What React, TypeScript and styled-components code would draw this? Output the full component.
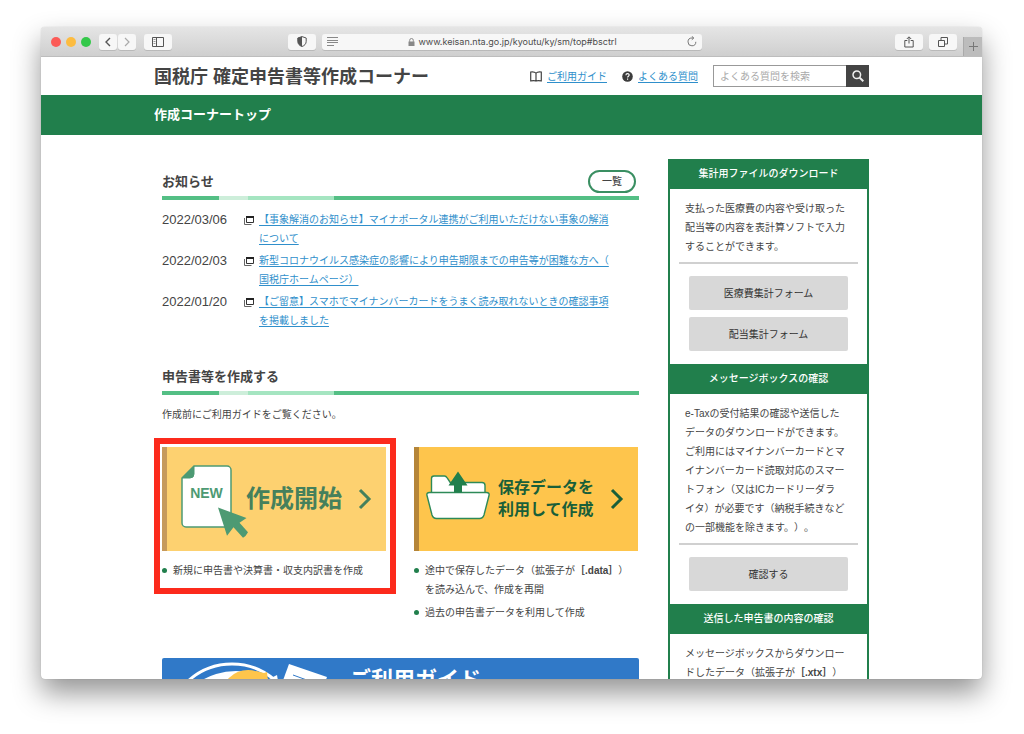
import React from "react";
import styled, { createGlobalStyle } from "styled-components";

const color = {
  green: "#217f4c",
  text: "#444",
  link: "#2f8fcb",
  grey: "#d8d8d8",
};

const GlobalStyle = createGlobalStyle`
  * { box-sizing: border-box; }
  body {
    margin: 0;
    background: #fff;
    color: ${color.text};
    font-family: "Liberation Sans", "Noto Sans CJK JP", sans-serif;
    font-size: 10px;
    line-height: 19px;
    text-spacing-trim: space-all;
  }
  h1, h2, p, ul { margin: 0; padding: 0; }
  ul { list-style: none; }
  button, input { font: inherit; color: inherit; }
  svg { display: block; }
`;

const Desktop = styled.div`
  display: flex;
  height: 100vh;
  padding: 27px 42px 55px 41px;
  overflow: hidden;
`;

const BrowserWindow = styled.div`
  display: flex;
  flex: 1;
  flex-direction: column;
  min-width: 0;
  overflow: hidden;
  border-radius: 4px;
  background: #fff;
  box-shadow: 0 14px 28px rgba(0, 0, 0, 0.42), 0 0 1px rgba(0, 0, 0, 0.3);
`;

/* Browser toolbar */

const Toolbar = styled.div`
  display: flex;
  flex: none;
  align-items: center;
  height: 30px;
  border-bottom: 1px solid #bdbdbd;
  background: linear-gradient(#e5e5e5, #cfcfcf);
`;

const ToolbarSide = styled.div<{ $end?: boolean }>`
  display: flex;
  flex: 1;
  align-items: center;
  justify-content: ${(p) => (p.$end ? "flex-end" : "flex-start")};
  gap: ${(p) => (p.$end ? 6 : 8)}px;
  height: 100%;
  padding-left: 10px;
`;

const Lights = styled.div`
  display: flex;
  gap: 5px;
`;

const Light = styled.button<{ $fill: string }>`
  width: 10px;
  height: 10px;
  padding: 0;
  border: 0;
  border-radius: 50%;
  background: ${(p) => p.$fill};
`;

const ButtonPair = styled.div`
  display: flex;
  gap: 1px;
`;

const ToolButton = styled.button<{ $narrow?: boolean; $push?: boolean }>`
  display: grid;
  place-items: center;
  width: ${(p) => (p.$narrow ? 18 : 28)}px;
  height: 16px;
  margin-left: ${(p) => (p.$push ? "auto" : 0)};
  margin-right: ${(p) => (p.$push ? 6 : 0)}px;
  padding: 0;
  border: 0;
  border-radius: 3px;
  background: #f7f7f7;
  color: #555;
  box-shadow: 0 1px 0 rgba(0, 0, 0, 0.12);
`;

const AddressBar = styled.div`
  display: flex;
  flex: 0 1 380px;
  align-items: center;
  justify-content: space-between;
  height: 16px;
  padding: 0 4px;
  border-radius: 3px;
  background: #f7f7f7;
  color: #666;
  box-shadow: 0 1px 0 rgba(0, 0, 0, 0.12);
`;

const Address = styled.label`
  display: flex;
  align-items: center;
  gap: 3px;
`;

const AddressInput = styled.input`
  field-sizing: content;
  height: 16px;
  padding: 0;
  border: 0;
  background: none;
  color: #4c4c4c;
  font: 9px/16px Inter, sans-serif;
`;

const NewTab = styled.button`
  display: grid;
  align-self: flex-end;
  place-items: center;
  width: 19px;
  height: 19px;
  padding: 0;
  border: 0;
  border-left: 1px solid #aaa;
  background: #bcbcbc;
  color: #777;
`;

/* Page frame */

const Page = styled.div`
  flex: 1;
  min-height: 0;
  overflow: hidden;
`;

const Container = styled.div`
  max-width: 715px;
  margin: 0 auto;
`;

const HeaderRow = styled(Container)`
  display: flex;
  align-items: center;
  height: 38px;
`;

const SiteTitle = styled.h1`
  margin-right: auto;
  font-size: 18px;
  line-height: 26px;
  padding-top: 2px;
`;

const HeaderLink = styled.div`
  display: flex;
  align-items: center;
  gap: 5px;
  margin-right: 15px;
`;

const TextLink = styled.a`
  color: ${color.link};
  text-decoration: underline;
  text-underline-offset: 2px;
`;

const SearchForm = styled.form`
  display: flex;
  height: 22px;
`;

const SearchInput = styled.input`
  width: 133px;
  padding: 0 6px;
  border: 1px solid #999;
  border-right: 0;
  border-radius: 0;
  background: #fff;
  &::placeholder { color: #aaa; }
`;

const SearchButton = styled.button`
  display: grid;
  place-items: center;
  width: 23px;
  padding: 0;
  border: 0;
  background: #444;
  color: #eee;
`;

const TitleBand = styled.div`
  background: ${color.green};
  color: #fff;
  font-size: 13px;
  font-weight: 700;
  line-height: 40px;
`;

const Columns = styled(Container)`
  display: grid;
  grid-template-columns: minmax(0, 1fr) 201px;
  align-items: start;
  gap: 29px;
  padding-top: 24px;
`;

/* Main column */

const Main = styled.main`
  padding: 11px 0 0 8px;
`;

const SectionHead = styled.div`
  display: flex;
  align-items: center;
  justify-content: space-between;
  height: 30px;
  padding: 0 3px 7px 0;
  background: linear-gradient(
      to right,
      #54bf85 12%,
      #cdeeda 12% 18%,
      #a5e5c1 18% 36%,
      #54bf85 36%
    )
    bottom / 100% 4px no-repeat;
`;

const SectionTitle = styled.h2`
  font-size: 13px;
  line-height: 23px;
`;

const Pill = styled.a`
  width: 48px;
  height: 23px;
  border: 2px solid #3a8f62;
  border-radius: 12px;
  color: ${color.text};
  font-weight: 500;
  text-align: center;
  text-decoration: none;
`;

const NewsList = styled.ul`
  display: grid;
  gap: 3px;
  margin: 10px 0 35px;
`;

const NewsItem = styled.li`
  display: grid;
  grid-template-columns: 82px 15px minmax(0, 1fr);
`;

const NewsDate = styled.time`
  font-size: 13px;
`;

const WindowIcon = styled.svg`
  margin-top: 6px;
`;

const Lead = styled.p`
  margin: 10px 0 23px;
`;

const Choices = styled.div`
  display: grid;
  grid-template-columns: 1fr 1fr;
  gap: 28px;
  padding-right: 1px;
  margin-bottom: 36px;
`;

const Choice = styled.section`
  position: relative;
`;

const RedFrame = styled.div`
  position: absolute;
  inset: -9px -10px 28px -8px;
  border: 6px solid #fc2a1c;
  pointer-events: none;
`;

const ChoiceCard = styled.a<{ $soft?: boolean }>`
  display: flex;
  align-items: center;
  height: 104px;
  margin-bottom: 10px;
  padding-right: 14px;
  border-left: 5px solid ${(p) => (p.$soft ? "#c69a5c" : "#b58538")};
  background: ${(p) => (p.$soft ? "#fdd170" : "#fec54c")};
  color: ${(p) => (p.$soft ? "#45805c" : "#195f39")};
  font-size: ${(p) => (p.$soft ? 24 : 16)}px;
  font-weight: 700;
  line-height: 22px;
  text-decoration: none;
`;

const CardIcon = styled.svg`
  flex: none;
  overflow: visible;
`;

const Chevron = styled.svg`
  margin-left: auto;
`;

const Bullets = styled.ul`
  display: grid;
  gap: 4px;
`;

const Bullet = styled.li`
  display: flex;
  gap: 6px;
  &::before {
    content: "";
    flex: none;
    width: 5px;
    height: 5px;
    margin-top: 7px;
    border-radius: 50%;
    background: ${color.green};
  }
`;

const GuideBanner = styled.a`
  display: flex;
  height: 100px;
  overflow: hidden;
  border-radius: 2px;
  background: #3079c8;
  color: #fff;
  font-size: 22px;
  font-weight: 700;
  line-height: 24px;
  text-decoration: none;
`;

const BannerText = styled.span`
  padding-top: 10px;
`;

/* Side column */

const Aside = styled.aside`
  border: solid ${color.green};
  border-width: 0 2px;
`;

const AsideTitle = styled.h2`
  background: ${color.green};
  color: #fff;
  font-size: 10px;
  font-weight: 500;
  line-height: 30px;
  text-align: center;
`;

const AsideBody = styled.div`
  padding: 10px 9px 13px;
`;

const AsideText = styled.p`
  padding: 0 0 6px 6px;
  border-bottom: 2px solid #d0d0d0;
`;

const AsideButtons = styled.div`
  display: grid;
  gap: 7px;
  padding: 12px 10px 0;
`;

const GreyButton = styled.button`
  height: 34px;
  padding: 0;
  border: 0;
  border-radius: 2px;
  background: ${color.grey};
  color: #333;
`;

const news = [
  {
    date: "2022/03/06",
    lines: [
      "【事象解消のお知らせ】マイナポータル連携がご利用いただけない事象の解消",
      "について",
    ],
  },
  {
    date: "2022/02/03",
    lines: [
      "新型コロナウイルス感染症の影響により申告期限までの申告等が困難な方へ（",
      "国税庁ホームページ）",
    ],
  },
  {
    date: "2022/01/20",
    lines: [
      "【ご留意】スマホでマイナンバーカードをうまく読み取れないときの確認事項",
      "を掲載しました",
    ],
  },
];

function BrowserBar() {
  return (
    <Toolbar>
      <ToolbarSide>
        <Lights>
          <Light $fill="#fc5b57" aria-label="閉じる" />
          <Light $fill="#fdbc40" aria-label="しまう" />
          <Light $fill="#34c84a" aria-label="拡大" />
        </Lights>
        <ButtonPair>
          <ToolButton $narrow aria-label="戻る">
            <svg width="8" height="10" viewBox="0 0 8 10" fill="none" stroke="currentColor" strokeWidth="1.4">
              <path d="M6 1 2 5l4 4" />
            </svg>
          </ToolButton>
          <ToolButton $narrow aria-label="進む">
            <svg width="8" height="10" viewBox="0 0 8 10" fill="none" stroke="#aaa" strokeWidth="1.2">
              <path d="m2 1 4 4-4 4" />
            </svg>
          </ToolButton>
        </ButtonPair>
        <ToolButton aria-label="サイドバー">
          <svg width="12" height="10" viewBox="0 0 12 10" fill="none" stroke="currentColor">
            <path d="M.5.5h11v9H.5zM4.5.5v9" />
            <path d="M1.500 2.500h2M1.500 4.500h2M1.500 6.500h2" stroke="#999" />
          </svg>
        </ToolButton>
        <ToolButton $push aria-label="プライバシーレポート">
          <svg width="10" height="11" viewBox="0 0 10 11">
            <path d="M5 .6 9.200 2v3.300C9.200 8 7.500 9.600 5 10.500 2.500 9.600.8 8 .8 5.300V2z" fill="none" stroke="currentColor" />
            <path d="M5 .6v9.900C2.500 9.600.8 8 .8 5.300V2z" fill="currentColor" />
          </svg>
        </ToolButton>
      </ToolbarSide>
      <AddressBar>
        <svg width="12" height="9" viewBox="0 0 12 9" stroke="#888">
          <path d="M1 .5h11M1 3.500h11M1 5.500h11M1 8.500h7" />
        </svg>
        <Address>
          <svg width="7" height="8" viewBox="0 0 7 8" aria-label="安全な接続">
            <path d="M.5 3.500h6V8h-6z" fill="#888" />
            <path d="M1.700 3.800V2.300a1.800 1.800 0 0 1 3.600 0v1.500" fill="none" stroke="#888" />
          </svg>
          <AddressInput readOnly aria-label="アドレス" value="www.keisan.nta.go.jp/kyoutu/ky/sm/top#bsctrl" />
        </Address>
        <svg width="10" height="11" viewBox="0 0 10 11" fill="none" stroke="#777">
          <path d="M8.800 5.800A3.900 3.900 0 1 1 5 2h1.500" />
          <path d="m4.800.3 2 1.700-2 1.800" />
        </svg>
      </AddressBar>
      <ToolbarSide $end>
        <ToolButton aria-label="共有">
          <svg width="10" height="12" viewBox="0 0 10 12" fill="none" stroke="currentColor">
            <path d="M3.300 4.500H.8v6.500h8.400V4.500H6.700M5 7.500V1M2.800 3 5 .8 7.200 3" />
          </svg>
        </ToolButton>
        <ToolButton aria-label="タブの概要">
          <svg width="10" height="10" viewBox="0 0 10 10" fill="none" stroke="currentColor">
            <path d="M.5 3.500h6v6h-6zM3 3.300V.500h6.500V7H6.700" />
          </svg>
        </ToolButton>
        <NewTab aria-label="新規タブ">
          <svg width="9" height="9" viewBox="0 0 9 9" stroke="currentColor">
            <path d="M4.500 0v9M0 4.500h9" />
          </svg>
        </NewTab>
      </ToolbarSide>
    </Toolbar>
  );
}

function SiteHeader() {
  return (
    <header>
      <HeaderRow>
        <SiteTitle>国税庁 確定申告書等作成コーナー</SiteTitle>
        <HeaderLink>
          <svg width="12" height="11" viewBox="0 0 12 11" fill="none" stroke="#444" strokeWidth="1.200">
            <path d="M6 2.200C4.800.9 2.800.7.700 1v8.800c2-.3 4.100-.6 5.300.2 1.200-.8 3.300-.5 5.300-.2V1C9.200.7 7.200.9 6 2.200zM6 2.200V10" />
          </svg>
          <TextLink href="#guide">ご利用ガイド</TextLink>
        </HeaderLink>
        <HeaderLink>
          <svg width="11" height="11" viewBox="0 0 11 11">
            <circle cx="5.500" cy="5.500" r="5.300" fill="#3c3c3c" />
            <path d="M3.900 4.300c0-2.300 3.300-2.100 3.300-.2 0 1.200-1.600 1.200-1.600 2.500M5.600 7.600v1.200" fill="none" stroke="#fff" strokeWidth="1.100" />
          </svg>
          <TextLink href="#faq">よくある質問</TextLink>
        </HeaderLink>
        <SearchForm>
          <SearchInput aria-label="よくある質問を検索" placeholder="よくある質問を検索" />
          <SearchButton type="button" aria-label="検索">
            <svg width="12" height="12" viewBox="0 0 12 12" fill="none" stroke="currentColor" strokeWidth="1.500">
              <circle cx="4.800" cy="4.800" r="3.800" />
              <path d="m7.600 7.600 3.700 3.700" strokeWidth="2" />
            </svg>
          </SearchButton>
        </SearchForm>
      </HeaderRow>
      <TitleBand>
        <Container>作成コーナートップ</Container>
      </TitleBand>
    </header>
  );
}

function ChevronRight() {
  return (
    <Chevron width="14" height="22" viewBox="0 0 14 22" fill="none" stroke="currentColor" strokeWidth="3">
      <path d="m2 2 9 9-9 9" />
    </Chevron>
  );
}

function NewFileIcon() {
  return (
    <CardIcon width="79" height="104" viewBox="5 0 79 104">
      <path
        d="M32 19h33a4 4 0 0 1 4 4v53a4 4 0 0 1-4 4H24a4 4 0 0 1-4-4V31z"
        fill="#fff"
        stroke="#4d9a73"
        strokeWidth="1.500"
      />
      <path d="M32 19v8a4 4 0 0 1-4 4h-8z" fill="#4d9a73" stroke="#4d9a73" />
      <text x="44.500" y="51" textAnchor="middle" fill="#4d9a73" fontSize="14" fontWeight="700">
        NEW
      </text>
      <path d="m56 60.500 28.500 10.500-7 4.700 8.500 9.500q-2 4-5 5.500l-9.500-10.500-6.500 8.500z" fill="#4d9a73" />
    </CardIcon>
  );
}

function FolderIcon() {
  return (
    <CardIcon width="79" height="104" viewBox="5 0 79 104">
      <g fill="#fff" stroke="#2d8a58" strokeWidth="1.400">
        <path d="M17.500 46V31.500a2.500 2.500 0 0 1 2.500-2.500h10.500c1.500 0 2 .8 2.700 2l3 4.500H68a3 3 0 0 1 3 3V46z" />
        <path d="M15.500 45.500h57c2 0 3 1 2.500 3l-5 19.500c-.8 2.500-2 3.500-4.500 3.500h-43c-2.500 0-3.700-1-4.500-3.500L13 48.500c-.5-2 .5-3 2.500-3z" />
      </g>
      <path d="m44 24.500 9.500 14H48v7h-8v-7h-5.500z" fill={color.green} />
    </CardIcon>
  );
}

function BannerArt() {
  return (
    <svg width="187" height="100" viewBox="0 0 187 100">
      <circle cx="70" cy="71" r="65" fill="none" stroke="#fff" strokeWidth="3" />
      <ellipse cx="74" cy="51" rx="52" ry="38" fill="#fff" />
      <circle cx="86" cy="39" r="27" fill="#fec54c" />
      <path d="m94 13 8 2 3-1 1 10-8 4z" fill="#fec54c" />
      <path d="m107 21 8-4 2 12z" fill="#fff" />
      <path d="m127 6 38 13-22 60-38-13z" fill="#fff" />
      <path d="m131 17 22 8" stroke="#3079c8" />
    </svg>
  );
}

export default function App() {
  return (
    <>
      <GlobalStyle />
      <Desktop>
        <BrowserWindow>
          <BrowserBar />
          <Page>
            <SiteHeader />
            <Columns>
              <Main>
                <SectionHead>
                  <SectionTitle>お知らせ</SectionTitle>
                  <Pill href="#news">一覧</Pill>
                </SectionHead>
                <NewsList>
                  {news.map((item) => (
                    <NewsItem key={item.date}>
                      <NewsDate>{item.date}</NewsDate>
                      <WindowIcon width="10" height="9" viewBox="0 0 10 9" fill="none">
                        <path d="M.5 2v6.500h7" stroke="#666" />
                        <path d="M2.500.5h7v6h-7z" stroke="#333" />
                        <path d="M2 1h8" stroke="#222" strokeWidth="2" />
                      </WindowIcon>
                      <div>
                        <TextLink href="#news">
                          {item.lines[0]}
                          <br />
                          {item.lines[1]}
                        </TextLink>
                      </div>
                    </NewsItem>
                  ))}
                </NewsList>

                <SectionHead>
                  <SectionTitle>申告書等を作成する</SectionTitle>
                </SectionHead>
                <Lead>作成前にご利用ガイドをご覧ください。</Lead>
                <Choices>
                  <Choice>
                    <ChoiceCard $soft href="#new">
                      <NewFileIcon />
                      作成開始
                      <ChevronRight />
                    </ChoiceCard>
                    <Bullets>
                      <Bullet>新規に申告書や決算書・収支内訳書を作成</Bullet>
                    </Bullets>
                    <RedFrame />
                  </Choice>
                  <Choice>
                    <ChoiceCard href="#saved">
                      <FolderIcon />
                      <span>
                        保存データを
                        <br />
                        利用して作成
                      </span>
                      <ChevronRight />
                    </ChoiceCard>
                    <Bullets>
                      <Bullet>
                        <span>
                          途中で保存したデータ（拡張子が<b>［.data］</b>）
                          <br />
                          を読み込んで、作成を再開
                        </span>
                      </Bullet>
                      <Bullet>過去の申告書データを利用して作成</Bullet>
                    </Bullets>
                  </Choice>
                </Choices>
                <GuideBanner href="#guide">
                  <BannerArt />
                  <BannerText>ご利用ガイド</BannerText>
                </GuideBanner>
              </Main>

              <Aside>
                <AsideTitle>集計用ファイルのダウンロード</AsideTitle>
                <AsideBody>
                  <AsideText>
                    支払った医療費の内容や受け取った
                    <br />
                    配当等の内容を表計算ソフトで入力
                    <br />
                    することができます。
                  </AsideText>
                  <AsideButtons>
                    <GreyButton>医療費集計フォーム</GreyButton>
                    <GreyButton>配当集計フォーム</GreyButton>
                  </AsideButtons>
                </AsideBody>
                <AsideTitle>メッセージボックスの確認</AsideTitle>
                <AsideBody>
                  <AsideText>
                    e-Taxの受付結果の確認や送信した
                    <br />
                    データのダウンロードができます。
                    <br />
                    ご利用にはマイナンバーカードとマ
                    <br />
                    イナンバーカード読取対応のスマー
                    <br />
                    トフォン（又はICカードリーダラ
                    <br />
                    イタ）が必要です（納税手続きなど
                    <br />
                    の一部機能を除きます。）。
                  </AsideText>
                  <AsideButtons>
                    <GreyButton>確認する</GreyButton>
                  </AsideButtons>
                </AsideBody>
                <AsideTitle>送信した申告書の内容の確認</AsideTitle>
                <AsideBody>
                  <AsideText>
                    メッセージボックスからダウンロー
                    <br />
                    ドしたデータ（拡張子が<b>［.xtx］</b>）
                  </AsideText>
                </AsideBody>
              </Aside>
            </Columns>
          </Page>
        </BrowserWindow>
      </Desktop>
    </>
  );
}
